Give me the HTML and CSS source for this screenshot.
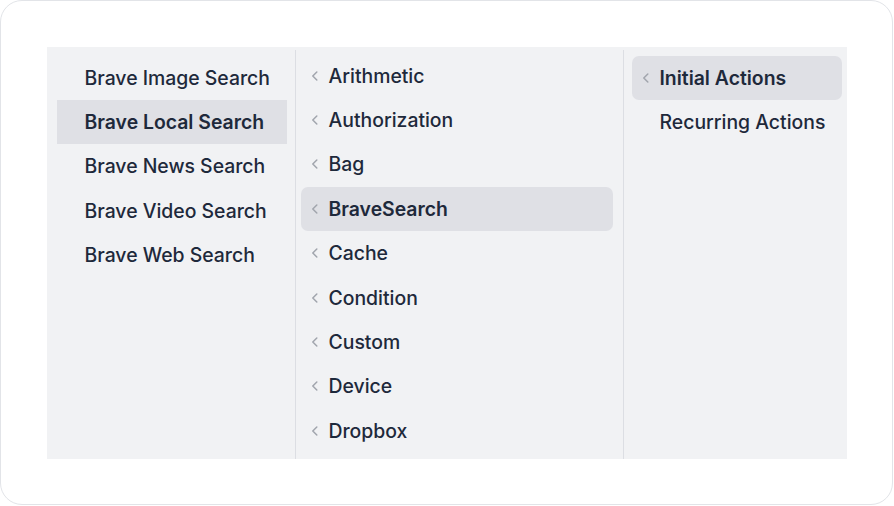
FILE: index.html
```html
<!DOCTYPE html>
<html>
<head>
<meta charset="utf-8">
<link rel="stylesheet" href="styles.css">
</head>
<body>
<div class="card">
  <div class="panel">
    <div class="col col1">
      <div class="item"><span class="chev"></span><span class="label">Brave Image Search</span></div>
      <div class="item active square"><span class="chev"></span><span class="label">Brave Local Search</span></div>
      <div class="item"><span class="chev"></span><span class="label">Brave News Search</span></div>
      <div class="item"><span class="chev"></span><span class="label">Brave Video Search</span></div>
      <div class="item"><span class="chev"></span><span class="label">Brave Web Search</span></div>
    </div>
    <div class="col col2">
      <div class="item"><span class="chev"><svg viewBox="0 0 8 10" width="8" height="10"><path d="M5.8 1 L1.8 5 L5.8 9"/></svg></span><span class="label">Arithmetic</span></div>
      <div class="item"><span class="chev"><svg viewBox="0 0 8 10" width="8" height="10"><path d="M5.8 1 L1.8 5 L5.8 9"/></svg></span><span class="label">Authorization</span></div>
      <div class="item"><span class="chev"><svg viewBox="0 0 8 10" width="8" height="10"><path d="M5.8 1 L1.8 5 L5.8 9"/></svg></span><span class="label">Bag</span></div>
      <div class="item active"><span class="chev"><svg viewBox="0 0 8 10" width="8" height="10"><path d="M5.8 1 L1.8 5 L5.8 9"/></svg></span><span class="label">BraveSearch</span></div>
      <div class="item"><span class="chev"><svg viewBox="0 0 8 10" width="8" height="10"><path d="M5.8 1 L1.8 5 L5.8 9"/></svg></span><span class="label">Cache</span></div>
      <div class="item"><span class="chev"><svg viewBox="0 0 8 10" width="8" height="10"><path d="M5.8 1 L1.8 5 L5.8 9"/></svg></span><span class="label">Condition</span></div>
      <div class="item"><span class="chev"><svg viewBox="0 0 8 10" width="8" height="10"><path d="M5.8 1 L1.8 5 L5.8 9"/></svg></span><span class="label">Custom</span></div>
      <div class="item"><span class="chev"><svg viewBox="0 0 8 10" width="8" height="10"><path d="M5.8 1 L1.8 5 L5.8 9"/></svg></span><span class="label">Device</span></div>
      <div class="item"><span class="chev"><svg viewBox="0 0 8 10" width="8" height="10"><path d="M5.8 1 L1.8 5 L5.8 9"/></svg></span><span class="label">Dropbox</span></div>
    </div>
    <div class="col col3">
      <div class="item active"><span class="chev"><svg viewBox="0 0 8 10" width="8" height="10"><path d="M5.8 1 L1.8 5 L5.8 9"/></svg></span><span class="label">Initial Actions</span></div>
      <div class="item"><span class="chev"></span><span class="label">Recurring Actions</span></div>
    </div>
  </div>
</div>
</body>
</html>
```

FILE: styles.css
```css
* { box-sizing: border-box; }
html, body { margin: 0; padding: 0; background: #ffffff; }
body {
  font-family: Inter, "Noto Sans", sans-serif;
  width: 894px;
  height: 506px;
  overflow: hidden;
}
.card {
  width: 893px;
  height: 505px;
  border: 1.5px solid #e2e4e8;
  border-radius: 22px;
  padding: 45.5px 44.5px 45.5px 45.5px;
  background: #ffffff;
}
.panel {
  display: flex;
  width: 800px;
  height: 412px;
  background: #f1f2f4;
}
.col {
  display: flex;
  flex-direction: column;
  margin-top: 3px;
}
.col1 {
  width: 249px;
  padding: 6px 8px 0 10px;
  border-right: 1px solid #dcdee3;
}
.col2 {
  width: 328px;
  padding: 4px 10px 0 5px;
  border-right: 1px solid #dcdee3;
}
.col3 {
  flex: 1;
  padding: 6px 5px 0 8px;
}
.item {
  display: flex;
  align-items: center;
  padding: 10px 10px;
  height: 44.4px;
  border-radius: 7px;
  color: #1f2937;
  font-size: 19.4px;
  font-weight: 500;
  line-height: 24px;
  white-space: nowrap;
}
.item.square { border-radius: 0; }
.item.active {
  background: #dfe0e5;
  font-weight: 600;
}
.chev {
  width: 8px;
  height: 10px;
  margin-right: 10px;
  display: flex;
  flex: none;
}
.chev svg {
  display: block;
  fill: none;
  stroke: #a1a5ad;
  stroke-width: 1.5;
  stroke-linecap: round;
  stroke-linejoin: round;
}
.label { color: #1e293b; }
```
